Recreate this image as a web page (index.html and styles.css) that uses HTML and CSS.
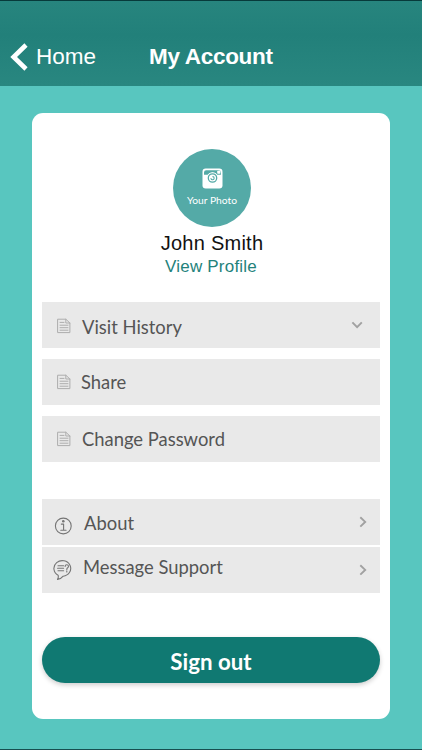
FILE: index.html
```html
<!DOCTYPE html>
<html lang="en">
<head>
<meta charset="utf-8">
<title>My Account</title>
<link rel="stylesheet" href="styles.css">
</head>
<body>
<svg class="symbols" aria-hidden="true">
  <symbol id="document" viewBox="0 0 14 16">
    <path d="M1 1.2H8.8L12.9 5V14.6H1ZM8.8 1.2V5H12.9M3 4.4H7M3 7.2H11M3 9.7H11M3 12.2H11"/>
  </symbol>
  <symbol id="chevron" viewBox="0 0 8 12">
    <path d="M1.3 1.2L6.2 5.9L1.3 10.6"/>
  </symbol>
</svg>
<header class="navbar">
  <a class="back">
    <svg class="back-icon" viewBox="0 0 18 28"><path d="M16 2L3.6 14L16 26"/></svg>
    <span class="back-label">Home</span>
  </a>
  <h1 class="title">My Account</h1>
</header>
<main class="card">
  <section class="profile">
    <div class="photo">
      <svg class="camera" viewBox="0 0 21 21">
        <rect class="camera-body" x=".5" y=".5" width="20" height="20" rx="3.2"/>
        <path class="camera-cut" d="M2 4.4Q2 2.2 4.2 2.2H16.5Q18.9 2.2 18.9 4.4V6.8H15.2Q13.5 4.4 10.5 4.4T5.8 6.8H2Z"/>
        <rect class="camera-flash" x="15.2" y="2.7" width="3.2" height="3" rx=".8"/>
        <circle class="camera-body" cx="10.5" cy="10" r="5.8"/>
        <circle class="camera-ring" cx="10.5" cy="10" r="4.2"/>
        <path class="camera-glint" d="M9 10.6A1.6 1.6 0 1 0 10.9 8.6"/>
      </svg>
      <span class="photo-label">Your Photo</span>
    </div>
    <h2 class="name">John Smith</h2>
    <a class="view">View Profile</a>
  </section>
  <nav class="menu">
    <a class="row history"><svg class="doc"><use href="#document"/></svg><span class="label">Visit History</span><svg class="chevron down"><use href="#chevron"/></svg></a>
    <a class="row share"><svg class="doc"><use href="#document"/></svg><span class="label">Share</span></a>
    <a class="row password"><svg class="doc"><use href="#document"/></svg><span class="label">Change Password</span></a>
  </nav>
  <nav class="menu help">
    <a class="row about">
      <svg class="round-icon" viewBox="0 0 20 22"><circle cx="10.3" cy="11" r="7.9"/><path d="M8.3 9.1H10.6V15M7.8 15.3H13.1"/><circle class="dot" cx="10.3" cy="6.3" r="1.3"/></svg>
      <span class="label">About</span><svg class="chevron"><use href="#chevron"/></svg>
    </a>
    <a class="row support">
      <svg class="round-icon" viewBox="0 0 20 22"><path d="M5.1 16.2A8.4 7.8 0 1 1 10.2 17.2C8.8 19 6.8 20.2 4.5 20.4C5.4 19 5.5 17.6 5.1 16.2ZM5 6.8H10.6M4.6 9.3H10.6M5 11.8H10.6M12.1 7.4Q12.2 5.8 13.8 5.8T15.5 7.3Q15.5 8.4 14.4 9Q13.8 9.4 13.8 10.8M13.8 12V13"/></svg>
      <span class="label">Message Support</span><svg class="chevron"><use href="#chevron"/></svg>
    </a>
  </nav>
  <button class="signout">Sign out</button>
</main>
</body>
</html>
```
FILE: styles.css
```css
* { box-sizing: border-box; }
body {
  margin: 0;
  height: 750px;
  overflow: hidden;
  background: #58c6bf;
  border-bottom: 1px solid #174f50;
  font-family: Lato, "Liberation Sans", sans-serif;
}
.symbols { display: none; }
svg { display: block; flex: none; fill: none; stroke-linecap: round; stroke-linejoin: round; }
.navbar {
  height: 86px;
  padding: 26px 0 0 10px;
  display: flex;
  align-items: center;
  border-top: 1px solid #073a3a;
  background: linear-gradient(#27857e, #22807a 40%, #298780);
  color: #fff;
  font-family: "Liberation Sans", sans-serif;
}
.back { display: flex; align-items: center; width: 139px; }
.back-icon { width: 18px; height: 28px; stroke: #fff; stroke-width: 4.6; stroke-linecap: butt; stroke-linejoin: miter; }
.back-label { margin-left: 8px; font-size: 22.5px; line-height: 28px; }
.title { margin: 0; font-size: 22.5px; line-height: 28px; letter-spacing: -.3px; }
.card {
  width: 358px;
  height: 606px;
  margin: 27px 0 0 32px;
  padding: 36px 10px 0;
  border-radius: 11px;
  background: #fff;
}
.profile { display: flex; flex-direction: column; align-items: center; height: 153px; padding-left: 2px; }
.photo {
  width: 78px;
  height: 78px;
  flex: none;
  padding-top: 19px;
  border-radius: 50%;
  background: #54aaa7;
  color: #fff;
  display: flex;
  flex-direction: column;
  align-items: center;
}
.camera { width: 21px; height: 21px; }
.camera-body { fill: #fff; }
.camera-cut { fill: #54aaa7; }
.camera-flash { fill: #fff; }
.camera-ring { stroke: #54aaa7; stroke-width: 1.3; }
.camera-glint { stroke: #54aaa7; stroke-width: 1.1; }
.photo-label { margin-top: 5px; font-size: 10.3px; line-height: 13px; white-space: nowrap; }
.name { margin: 4px 0 0; color: #111; font: 400 20px/25px "Liberation Sans", sans-serif; letter-spacing: .25px; }
.view { margin: 1px 2px 0 0; color: #23827b; font: 17px/20px "Liberation Sans", sans-serif; letter-spacing: .2px; }
.menu { display: flex; flex-direction: column; gap: 11px; }
.help { gap: 2px; margin-top: 37px; }
.row {
  height: 46px;
  padding: 0 13px 0 15px;
  display: flex;
  align-items: center;
  background: #e9e9e9;
  color: #555;
  font-size: 18.4px;
  line-height: 24px;
}
.doc { width: 14px; height: 16px; margin-right: 11px; stroke: #adadad; stroke-width: 1; }
.history .doc { margin-top: 2px; }
.label { flex: 1; white-space: nowrap; }
.history .label { padding-top: 3px; }
.share .doc { margin-right: 10px; }
.help .row { padding-left: 11px; }
.round-icon { width: 20px; height: 22px; margin: 7px 11px 0 0; stroke: #757575; stroke-width: 1.1; }
.support .round-icon { margin: 0 10px 0 0; }
.support .label { padding-bottom: 7px; }
.about .label { padding-top: 2px; }
.dot { fill: #757575; stroke: none; }
.chevron { width: 8px; height: 12px; stroke: #a1a1a1; stroke-width: 1.9; stroke-linecap: butt; stroke-linejoin: miter; }
.down { transform: rotate(90deg); margin-right: 6px; }
.signout {
  display: block;
  width: 338px;
  height: 46px;
  margin: 44px 0 0;
  padding: 3px 0 0;
  border: 0;
  border-radius: 23px;
  background: #107972;
  box-shadow: 0 2px 5px #0003;
  color: #fff;
  font: 700 22.3px/28px Lato, sans-serif;
}
```
